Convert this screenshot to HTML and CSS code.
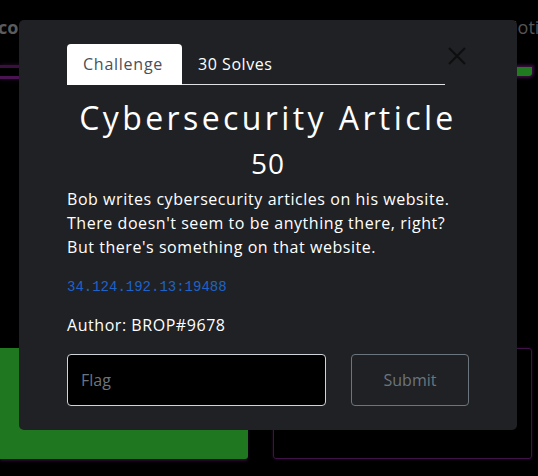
FILE: index.html
```html
<!DOCTYPE html>
<html lang="en">
<head>
<meta charset="utf-8">
<title>Cybersecurity Article</title>
<link rel="stylesheet" href="styles.css">
</head>
<body>
<div class="page">
  <header class="topbar">
    <span class="brand">con</span>
    <span class="notif">Notifications</span>
  </header>
  <section class="row row-top">
    <div class="card card-top-left"></div>
    <div class="card card-top-right"><span class="mini-btn"></span></div>
  </section>
  <section class="row row-bottom">
    <div class="card card-solved"></div>
    <div class="card card-open"></div>
  </section>
</div>

<div class="modal" role="dialog" aria-label="Cybersecurity Article">
  <button class="close" aria-label="Close">
    <svg width="18" height="18" viewBox="0 0 18 18"><path d="M1 1 L17 17 M17 1 L1 17" stroke="currentColor" stroke-width="2" fill="none"/></svg>
  </button>
  <nav class="tabs">
    <a class="tab active">Challenge</a>
    <a class="tab">30 Solves</a>
  </nav>
  <h2 class="title">Cybersecurity Article</h2>
  <div class="points">50</div>
  <p class="desc">Bob writes cybersecurity articles on his website.<br>There doesn't seem to be anything there, right?<br>But there's something on that website.</p>
  <a class="link">34.124.192.13:19488</a>
  <p class="author">Author: BROP#9678</p>
  <form class="submit-row">
    <input class="flag" type="text" placeholder="Flag">
    <button class="submit" type="button">Submit</button>
  </form>
</div>
</body>
</html>
```

FILE: styles.css
```css
* { box-sizing: border-box; }
html, body { margin: 0; padding: 0; }
body {
  width: 538px;
  height: 476px;
  overflow: hidden;
  background: #000;
  font-family: "Open Sans", "Noto Sans", sans-serif;
  color: #fff;
  position: relative;
}

.page {
  display: flex;
  flex-direction: column;
}
.topbar {
  height: 56px;
  display: flex;
  align-items: center;
  font-size: 18px;
  color: #5b5b5b;
  padding-bottom: 2px;
  overflow: hidden;
}
.brand { flex: 0 0 506px; font-weight: 700; margin-left: -2px; }
.notif { flex: none; white-space: nowrap; color: #555; }

.row {
  display: grid;
  grid-template-columns: 248px 259px;
  column-gap: 25px;
}
.row-top { height: 292px; }
.card-top-left {
  height: 14px;
  margin-top: 9px;
  border-top: 3px solid #3b1040;
  border-bottom: 3px solid #4a1452;
  box-shadow: 0 0 4px #2a0a30;
}
.card-top-right {
  display: flex;
  justify-content: flex-end;
  align-items: flex-start;
  padding-top: 11px;
}
.mini-btn {
  width: 33px;
  height: 9px;
  background: #1f7a20;
  border-radius: 0 0 3px 3px;
  box-shadow: 0 0 3px 2px #3a0f40;
}
.row-bottom { height: 108px; }
.card-solved {
  background: #1f771f;
  border-radius: 0 0 3px 0;
  box-shadow: 0 2px 3px #2d0b33;
}
.card-open {
  border: 1px solid #3f1347;
  border-radius: 3px;
  box-shadow: 0 0 3px #2d0b33;
  height: 111px;
}

/* modal (overlay) */
.modal {
  position: absolute;
  left: 19px;
  top: 20px;
  width: 498px;
  height: 410px;
  background: #202124;
  border-radius: 5px;
  padding: 24px 48px 0 48px;
  letter-spacing: 0.55px;
}
.close {
  position: absolute;
  right: 51px;
  top: 27px;
  background: none;
  border: 0;
  padding: 0;
  color: #0d0e10;
  width: 18px;
  height: 18px;
}
.close svg { display: block; }

.tabs {
  display: flex;
  height: 41px;
  border-bottom: 1px solid #dee2e6;
  margin-right: 24px;
}
.tab {
  font-size: 16px;
  padding: 0 16px;
  line-height: 40px;
  color: #fff;
}
.tab.active {
  background: #fff;
  color: #495057;
  border-radius: 4px 4px 0 0;
  width: 115px;
  margin-bottom: -1px;
  line-height: 41px;
  letter-spacing: 0.75px;
}

.title {
  margin: 13px 0 0;
  text-align: center;
  font-weight: 400;
  font-size: 32px;
  letter-spacing: 3.4px;
  line-height: 40px;
}
.points {
  text-align: center;
  font-size: 28px;
  line-height: 34px;
  margin-top: 8px;
  letter-spacing: 1px;
}
.desc {
  margin: 7px 0 0;
  font-size: 16px;
  line-height: 24px;
}
.link {
  display: block;
  margin-top: 19px;
  font-family: "Liberation Mono", monospace;
  font-size: 14px;
  line-height: 18px;
  letter-spacing: 0;
  color: #1e63c8;
}
.author {
  margin: 17px 0 0;
  font-size: 16px;
  line-height: 24px;
}
.submit-row {
  display: flex;
  justify-content: space-between;
  margin-top: 17px;
}
.flag {
  width: 259px;
  height: 52px;
  background: #000;
  border: 1px solid #ced4da;
  border-radius: 4px;
  padding: 0 13px;
  font: inherit;
  font-size: 16px;
  color: #fff;
}
.flag::placeholder { color: #6c757d; }
.submit {
  width: 118px;
  height: 52px;
  background: #1f2124;
  border: 1px solid #6c757d;
  border-radius: 4px;
  color: #6c757d;
  font: inherit;
  font-size: 16px;
}
```
